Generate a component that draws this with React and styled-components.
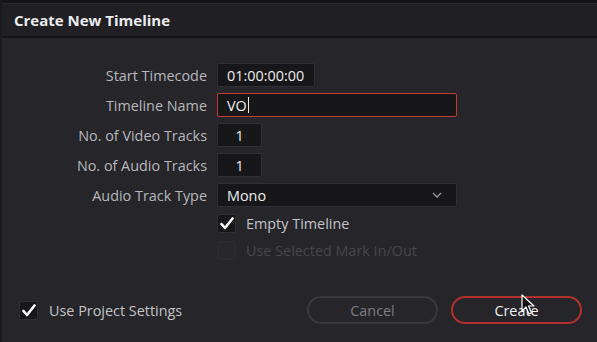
import React from "react";
import styled, { createGlobalStyle } from "styled-components";

const Global = createGlobalStyle`
  html, body { margin: 0; padding: 0; background: #25252a; }
  body { font-family: "Open Sans", "Noto Sans", sans-serif; }
  * { box-sizing: border-box; }
`;

const Dialog = styled.div`
  position: relative;
  width: 597px;
  height: 342px;
  display: flex;
  flex-direction: column;
  background: #25252a;
  border-left: 2px solid #1a1a1e;
  overflow: hidden;
`;

const TopStrip = styled.div`
  height: 4px;
  background: #151518;
  border-bottom: 1px solid #2a2a2f;
`;

const Header = styled.div`
  height: 34px;
  display: flex;
  align-items: center;
  padding-left: 12px;
  background: #1f1f24;
  border-bottom: 2px solid #161619;
`;

const Title = styled.h1`
  margin: 0;
  font-size: 15px;
  font-weight: 700;
  color: #ececee;
  letter-spacing: 0;
`;

const Body = styled.div`
  flex: 1;
  display: flex;
  flex-direction: column;
  padding-top: 25px;
`;

const Form = styled.div`
  display: grid;
  grid-template-columns: 205px 240px;
  grid-auto-rows: 24px;
  column-gap: 10px;
  row-gap: 6px;
`;

const Label = styled.div`
  display: flex;
  align-items: center;
  justify-content: flex-end;
  font-size: 14.4px;
  color: #b8b8bc;
`;

const Input = styled.div`
  display: flex;
  align-items: center;
  justify-content: ${(p) => (p.$center ? "center" : "flex-start")};
  width: ${(p) => p.$w}px;
  height: 24px;
  padding-left: ${(p) => (p.$center ? 0 : 9)}px;
  background: #17171a;
  border: 1px solid ${(p) => (p.$active ? "#c23a35" : "#2f2f34")};
  border-radius: 2px;
  font-size: 14.4px;
  color: #ededee;
`;

const Caret = styled.span`
  display: inline-block;
  width: 1px;
  height: 16px;
  margin-left: 1px;
  background: #ededee;
`;

const Select = styled(Input)`
  justify-content: space-between;
  padding-right: 14px;
`;

const CheckRows = styled.div`
  display: flex;
  flex-direction: column;
  gap: 8px;
  padding-left: 215px;
  margin-top: 7px;
`;

const CheckRow = styled.label`
  display: flex;
  align-items: center;
  gap: 10px;
  height: 19px;
  font-size: 14.4px;
  color: ${(p) => (p.$disabled ? "#47474c" : "#c4c4c8")};
`;

const Box = styled.span`
  width: 19px;
  height: 19px;
  display: flex;
  align-items: center;
  justify-content: center;
  background: ${(p) => (p.$disabled ? "#28282d" : "#17171a")};
  border: 1px solid ${(p) => (p.$disabled ? "#2c2c31" : "#2f2f34")};
  border-radius: 2px;
`;

const Footer = styled.div`
  margin-top: auto;
  height: 46px;
  margin-bottom: 9px;
  display: flex;
  align-items: center;
  padding-left: 17px;
  padding-right: 15px;
`;

const FooterCheck = styled(CheckRow)`
  gap: 11px;
  flex: 1;
`;

const Buttons = styled.div`
  display: flex;
  gap: 13px;
`;

const Button = styled.button`
  width: 131px;
  height: 28px;
  border-radius: 14px;
  background: transparent;
  border: 2px solid ${(p) => (p.$primary ? "#b3302d" : "#38383d")};
  color: ${(p) => (p.$primary ? "#f2f2f2" : "#7d7d82")};
  font-family: inherit;
  font-size: 14.4px;
  padding: 0;
`;

const Pointer = styled.svg`
  position: absolute;
  left: 519px;
  top: 294px;
`;

const Check = () => (
  <svg width="14" height="13" viewBox="0 0 14 13">
    <path d="M1.5 7 L5 11 L12.5 1.5" fill="none" stroke="#ffffff" strokeWidth="2.6" strokeLinecap="round" strokeLinejoin="round" />
  </svg>
);

const Chevron = () => (
  <svg width="10" height="6" viewBox="0 0 10 6">
    <path d="M1 1 L5 5 L9 1" fill="none" stroke="#9a9a9e" strokeWidth="1.3" />
  </svg>
);

export default function App() {
  return (
    <>
      <Global />
      <Dialog>
        <TopStrip />
        <Header>
          <Title>Create New Timeline</Title>
        </Header>
        <Body>
          <Form>
            <Label>Start Timecode</Label>
            <Input $w={98}>01:00:00:00</Input>
            <Label>Timeline Name</Label>
            <Input $w={240} $active>
              VO<Caret />
            </Input>
            <Label>No. of Video Tracks</Label>
            <Input $w={45} $center>1</Input>
            <Label>No. of Audio Tracks</Label>
            <Input $w={45} $center>1</Input>
            <Label>Audio Track Type</Label>
            <Select $w={240}>
              Mono
              <Chevron />
            </Select>
          </Form>
          <CheckRows>
            <CheckRow>
              <Box><Check /></Box>
              Empty Timeline
            </CheckRow>
            <CheckRow $disabled>
              <Box $disabled />
              Use Selected Mark In/Out
            </CheckRow>
          </CheckRows>
          <Footer>
            <FooterCheck>
              <Box><Check /></Box>
              Use Project Settings
            </FooterCheck>
            <Buttons>
              <Button>Cancel</Button>
              <Button $primary>Create</Button>
            </Buttons>
          </Footer>
        </Body>
        <Pointer width="14" height="22" viewBox="0 0 14 22">
          <path d="M1 1 L1 17 L5 13 L8 20 L10.5 19 L7.5 12 L13 12 Z" fill="#111" stroke="#fff" strokeWidth="1.2" strokeLinejoin="round" />
        </Pointer>
      </Dialog>
    </>
  );
}
